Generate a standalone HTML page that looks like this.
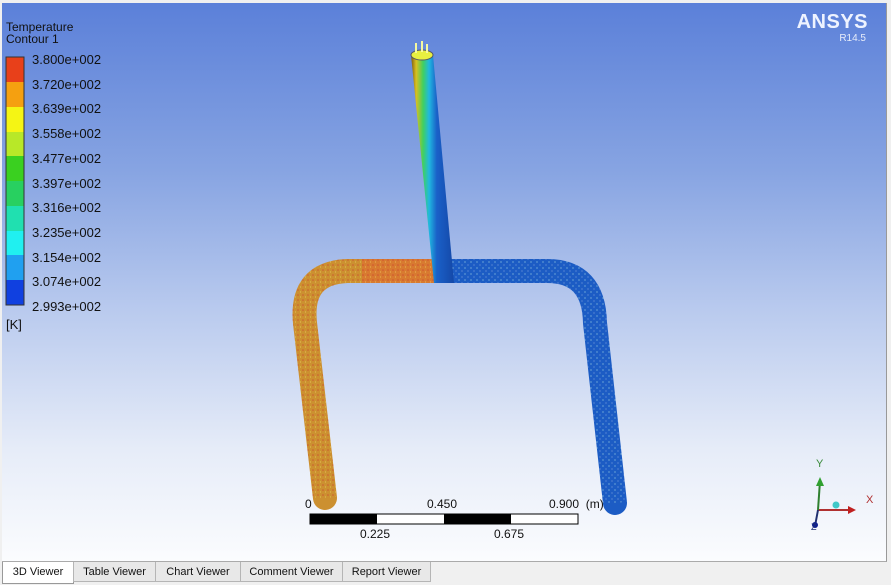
<!DOCTYPE html>
<html><head><meta charset="utf-8"><style>
*{margin:0;padding:0;box-sizing:border-box}
body{width:891px;height:585px;background:#f0f0f0;position:relative;overflow:hidden;font-family:"Liberation Sans",sans-serif}
#vp{position:absolute;left:2px;top:3px;width:885px;height:559px;background:linear-gradient(#5b80d9 0%,#87a4e2 30%,#b9caee 55%,#e6ecf8 80%,#fbfcfe 100%);border-right:1px solid #999;border-bottom:1px solid #aaa;overflow:hidden}
.lab{position:absolute;font-size:13px;color:#111}
.tabs{position:absolute;top:562px;left:2px;height:22px;display:flex}
.tab{font-size:11px;color:#111;border:1px solid #b5b5b5;border-top:none;background:#e8e8e8;height:20px;margin-left:-1px;text-align:center;padding-top:4px}
.tab.a{background:#fff;height:22px;border-color:#999}
</style></head><body>
<div id="vp">
<svg width="885" height="559" style="position:absolute;left:0;top:0">
<defs>
<linearGradient id="vg" x1="0" y1="0" x2="1" y2="0">
<stop offset="0" stop-color="#7a5a10"/><stop offset="0.12" stop-color="#d8c020"/><stop offset="0.28" stop-color="#40d060"/><stop offset="0.42" stop-color="#20b8e0"/><stop offset="0.6" stop-color="#1a60c8"/><stop offset="1" stop-color="#1448a8"/>
</linearGradient>
<linearGradient id="lg" x1="0" y1="0" x2="1" y2="0">
<stop offset="0" stop-color="#b88a20"/><stop offset="1" stop-color="#d87a30"/>
</linearGradient>
<pattern id="dots" width="6" height="6" patternUnits="userSpaceOnUse"><circle cx="1" cy="1" r="0.6" fill="#cfe" opacity="0.7"/><circle cx="4" cy="4" r="0.5" fill="#fff" opacity="0.6"/></pattern>
<pattern id="dots2" width="5" height="5" patternUnits="userSpaceOnUse"><circle cx="1" cy="2" r="0.8" fill="#c33" opacity="0.6"/><circle cx="3.5" cy="4" r="0.5" fill="#ff8" opacity="0.6"/></pattern>
</defs>
<path d="M323 495 L303 320 Q298 270 345 268 L446 268" fill="none" stroke="#cc9030" stroke-width="24" stroke-linecap="round"/>
<path d="M360 268 L446 268" fill="none" stroke="#d87a30" stroke-width="24"/>
<path d="M323 495 L303 320 Q298 270 345 268 L446 268" fill="none" stroke="url(#dots2)" stroke-width="24"/>
<path d="M444 268 L545 268 Q592 268 593 320 L613 500" fill="none" stroke="#1c5cc4" stroke-width="24" stroke-linecap="round"/>
<path d="M444 268 L545 268 Q592 268 593 320 L613 500" fill="none" stroke="url(#dots)" stroke-width="24"/>
<polygon points="409,52 431,52 452,280 432,280" fill="url(#vg)"/>
<ellipse cx="420" cy="52" rx="11" ry="5" fill="#e8f040" stroke="#556" stroke-width="1"/>
<path d="M414 50 L414 40 M420 49 L420 38 M425 50 L425 41" stroke="#f4f8a0" stroke-width="2"/>
<rect x="4" y="54" width="18" height="25" fill="#e8401a"/><rect x="4" y="79" width="18" height="25" fill="#f5a010"/><rect x="4" y="104" width="18" height="25" fill="#f5f514"/><rect x="4" y="129" width="18" height="24" fill="#b8e828"/><rect x="4" y="153" width="18" height="25" fill="#3ad020"/><rect x="4" y="178" width="18" height="25" fill="#28d060"/><rect x="4" y="203" width="18" height="25" fill="#20e0b0"/><rect x="4" y="228" width="18" height="24" fill="#20f0f0"/><rect x="4" y="252" width="18" height="25" fill="#20a0f0"/><rect x="4" y="277" width="18" height="25" fill="#1040e0"/>
<rect x="4" y="54" width="18" height="248" fill="none" stroke="#333" stroke-width="1"/>
<rect x="308" y="511" width="268" height="10" fill="#fff" stroke="#000"/>
<rect x="308" y="511" width="67" height="10" fill="#000"/><rect x="442" y="511" width="67" height="10" fill="#000"/>
<line x1="816" y1="507" x2="848" y2="507" stroke="#b03030" stroke-width="2"/><polygon points="846,503 854,507 846,511" fill="#c02020"/>
<line x1="816" y1="507" x2="818" y2="478" stroke="#308030" stroke-width="2"/><polygon points="814,483 818,474 822,483" fill="#30a030"/>
<line x1="816" y1="507" x2="813" y2="523" stroke="#203070" stroke-width="2"/><circle cx="813" cy="522" r="3" fill="#102090"/>
<circle cx="834" cy="502" r="3.5" fill="#40c8c8"/>
</svg>
<div class="lab" style="left:4px;top:18px;font-size:12px;line-height:12px">Temperature<br>Contour 1</div>
<div class="lab" style="left:30px;top:49px">3.800e+002</div>
<div class="lab" style="left:30px;top:74px">3.720e+002</div>
<div class="lab" style="left:30px;top:98px">3.639e+002</div>
<div class="lab" style="left:30px;top:123px">3.558e+002</div>
<div class="lab" style="left:30px;top:148px">3.477e+002</div>
<div class="lab" style="left:30px;top:173px">3.397e+002</div>
<div class="lab" style="left:30px;top:197px">3.316e+002</div>
<div class="lab" style="left:30px;top:222px">3.235e+002</div>
<div class="lab" style="left:30px;top:247px">3.154e+002</div>
<div class="lab" style="left:30px;top:271px">3.074e+002</div>
<div class="lab" style="left:30px;top:296px">2.993e+002</div>
<div class="lab" style="left:4px;top:314px">[K]</div>
<div style="position:absolute;right:18px;top:8px;color:#eef3ff;font-weight:bold;font-size:20px;letter-spacing:0.5px">ANSYS</div>
<div style="position:absolute;right:20px;top:30px;color:#e6ecfa;font-size:10px">R14.5</div>
<div class="lab" style="left:303px;top:494px;font-size:12px">0</div>
<div class="lab" style="left:425px;top:494px;font-size:12px">0.450</div>
<div class="lab" style="left:547px;top:494px;font-size:12px">0.900&nbsp;&nbsp;(m)</div>
<div class="lab" style="left:358px;top:524px;font-size:12px">0.225</div>
<div class="lab" style="left:492px;top:524px;font-size:12px">0.675</div>
<div class="lab" style="left:814px;top:455px;font-size:11px;color:#3a8a3a">Y</div>
<div class="lab" style="left:864px;top:491px;font-size:11px;color:#b03030">X</div>
<div class="lab" style="left:809px;top:519px;font-size:9px;color:#203070">Z</div>
</div>
<div class="tabs">
<div class="tab a" style="margin-left:0;width:72px">3D Viewer</div>
<div class="tab" style="width:83px">Table Viewer</div>
<div class="tab" style="width:86px">Chart Viewer</div>
<div class="tab" style="width:103px">Comment Viewer</div>
<div class="tab" style="width:89px">Report Viewer</div>
</div>
</body></html>
